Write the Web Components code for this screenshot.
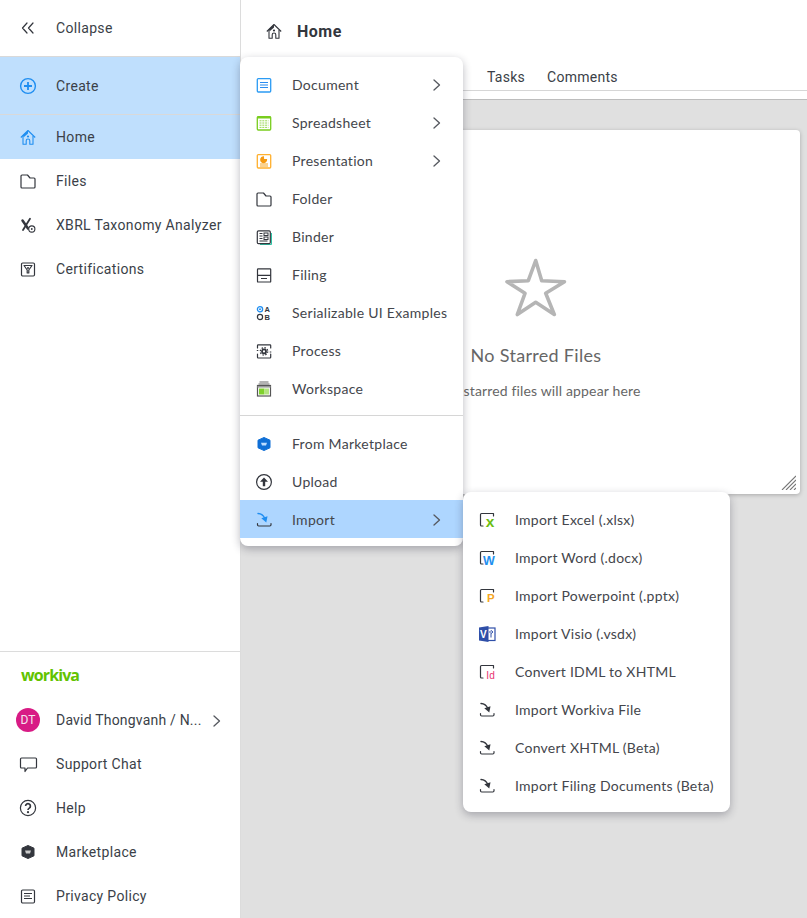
<!DOCTYPE html>
<html lang="en"><head><meta charset="utf-8"><title>Home</title>
<style>html,body{margin:0;padding:0;background:#fff}body{width:807px;height:918px;overflow:hidden;font-family:Roboto,"Liberation Sans",sans-serif}</style>
</head><body>
<wk-app>
  <wk-sidebar slot="side">
    <wk-nav-row icon="collapse" tall="56" rule>Collapse</wk-nav-row>
    <wk-nav-row icon="create" tall="57" rule selected>Create</wk-nav-row>
    <wk-nav-row icon="home" tall="44" selected>Home</wk-nav-row>
    <wk-nav-row icon="folder" tall="44">Files</wk-nav-row>
    <wk-nav-row icon="xbrl" tall="44">XBRL Taxonomy Analyzer</wk-nav-row>
    <wk-nav-row icon="cert" tall="44">Certifications</wk-nav-row>
    <wk-side-footer slot="foot">
      <wk-nav-row avatar="DT" tall="44" chevron style="letter-spacing:.2px">David Thongvanh / N...</wk-nav-row>
      <wk-nav-row icon="chat" tall="44">Support Chat</wk-nav-row>
      <wk-nav-row icon="help" tall="44">Help</wk-nav-row>
      <wk-nav-row icon="market" tall="44">Marketplace</wk-nav-row>
      <wk-nav-row icon="privacy" tall="44">Privacy Policy</wk-nav-row>
    </wk-side-footer>
  </wk-sidebar>
  <wk-main slot="main"></wk-main>
  <wk-menu slot="over" class="a" style="--l:240px;--t:57px;--w:223px">
    <wk-menu-item icon="doc" chevron>Document</wk-menu-item>
    <wk-menu-item icon="sheet" chevron>Spreadsheet</wk-menu-item>
    <wk-menu-item icon="pres" chevron>Presentation</wk-menu-item>
    <wk-menu-item icon="folder">Folder</wk-menu-item>
    <wk-menu-item icon="binder">Binder</wk-menu-item>
    <wk-menu-item icon="filing">Filing</wk-menu-item>
    <wk-menu-item icon="serial">Serializable UI Examples</wk-menu-item>
    <wk-menu-item icon="process">Process</wk-menu-item>
    <wk-menu-item icon="workspace">Workspace</wk-menu-item>
    <wk-menu-rule></wk-menu-rule>
    <wk-menu-item icon="marketblue" low>From Marketplace</wk-menu-item>
    <wk-menu-item icon="upload" low>Upload</wk-menu-item>
    <wk-menu-item icon="import" chevron active low>Import</wk-menu-item>
  </wk-menu>
  <wk-menu slot="over" wide style="--l:463px;--t:492px;--w:267px">
    <wk-menu-item icon="xl" wide>Import Excel (.xlsx)</wk-menu-item>
    <wk-menu-item icon="wd" wide>Import Word (.docx)</wk-menu-item>
    <wk-menu-item icon="pp" wide>Import Powerpoint (.pptx)</wk-menu-item>
    <wk-menu-item icon="vs" wide>Import Visio (.vsdx)</wk-menu-item>
    <wk-menu-item icon="id" wide>Convert IDML to XHTML</wk-menu-item>
    <wk-menu-item icon="importdark" wide>Import Workiva File</wk-menu-item>
    <wk-menu-item icon="importdark" wide>Convert XHTML (Beta)</wk-menu-item>
    <wk-menu-item icon="importdark" wide>Import Filing Documents (Beta)</wk-menu-item>
  </wk-menu>
</wk-app>
<script>
const D='#33363d',S=`fill="none" stroke="${D}" stroke-width="1.2" stroke-linecap="round" stroke-linejoin="round"`;
const T=(x,y,s,c,t,w=700)=>`<text x="${x}" y="${y}" font-family="Liberation Sans,sans-serif" font-size="${s}" font-weight="${w}" fill="${c}">${t}</text>`;
const docShell=`<path ${S} d="M3.500 15V4.500a1 1 0 0 1 1-1H16.500V6M3.500 15a1 1 0 0 0 1 1H6"/>`;
const imp=(c)=>`<path fill="none" stroke="${c}" stroke-width="1.400" stroke-linecap="round" d="M4 3.500c3.200.1 5.500 1.700 6.800 5"/><path fill="${c}" d="M7.300 8.300l6.200-2.100-1.200 6.300z"/><path ${S} d="M3.500 13.500v1.300a1.200 1.200 0 0 0 1.200 1.200h11.100a1.200 1.200 0 0 0 1.200-1.200v-1.300"/>`;
const homeI=(c)=>`<g fill="none" stroke="${c}" stroke-width="1.100" stroke-linejoin="round"><path d="M2.800 10.500L10 3.500l7.200 7"/><path d="M5 9V17.300h3.200v-3.500a1.800 1.800 0 0 1 3.600 0v3.500H15V9"/></g><path fill="${c}" d="M4.500 8.500L10 3.500v3L6 10z"/><circle cx="10" cy="9.500" r="1.100" fill="${c}"/>`;
const ICONS={
collapse:`<path ${S} d="M9 5L4.500 10L9 15M15 5L10.500 10L15 15"/>`,
create:`<circle cx="10" cy="10" r="7.400" fill="none" stroke="#1f8ef1" stroke-width="1.400"/><path stroke="#1f8ef1" stroke-width="1.800" d="M10 6v8M6 10h8"/>`,
home:homeI('#1f8ef1'),
homedark:homeI(D),
folder:`<path ${S} d="M3 5a1 1 0 0 1 1-1H9.500L12 7H16a1 1 0 0 1 1 1V16a1 1 0 0 1-1 1H4a1 1 0 0 1-1-1Z"/>`,
xbrl:`<path stroke="${D}" stroke-width="2.500" stroke-linecap="round" d="M4.500 5.500l5.500 8"/><path stroke="${D}" stroke-width="1.800" stroke-linecap="round" d="M12 3.800L5 15"/><circle cx="13.800" cy="14" r="3.100" fill="#fff" stroke="${D}" stroke-width="1.100"/><circle cx="13.800" cy="14" r=".9" fill="${D}"/>`,
cert:`<rect x="3.500" y="4" width="13" height="13" rx="1.200" ${S}/><path ${S} d="M6 6.500L9.200 11v3h1.600v-3L14 6.500z"/><circle cx="10" cy="9" r="1" fill="${D}"/>`,
chat:`<path ${S} d="M2.500 5a1 1 0 0 1 1-1H17.500a1 1 0 0 1 1 1v8a1 1 0 0 1-1 1H9.500L7 17.500V14H3.500a1 1 0 0 1-1-1Z"/>`,
help:`<circle cx="10" cy="10" r="7.600" ${S}/><path fill="none" stroke="${D}" stroke-width="1.700" d="M7.600 8.100a2.400 2.400 0 1 1 3.700 2c-.9.600-1.300 1-1.300 2"/><circle cx="10" cy="14.200" r="1.100" fill="${D}"/>`,
market:`<path fill="${D}" d="M10 3.500l6 2.700v7.600l-6 2.700-6-2.700V6.200z" stroke="${D}" stroke-linejoin="round"/><path fill="#ccc" d="M7 8.500h6l-1 3H8z"/>`,
marketblue:`<path fill="#0f6fd6" d="M10 3.500l6 2.700v7.600l-6 2.700-6-2.700V6.200z" stroke="#0f6fd6" stroke-linejoin="round"/><path fill="#bcdcff" d="M7 8.800h6l-1 2.700H8z"/>`,
privacy:`<rect x="3.500" y="4" width="13" height="13" rx="1.200" ${S}/><path stroke="${D}" d="M6 7.500h8M6 10h6M6 12.500h8"/>`,
doc:`<rect x="3.300" y="3.600" width="13.400" height="13.400" rx="1" fill="#fff" stroke="#2b9bf4" stroke-width="1.300"/><path stroke="#2b8cf0" stroke-width="1.100" d="M6 7.500h8M6 10h8M6 12.500h8"/>`,
sheet:`<rect x="3.300" y="3.600" width="13.400" height="13.400" rx="1" fill="#fff" stroke="#79cd1e" stroke-width="1.300"/><path fill="#79cd1e" d="M3 3.500h14V5.500H3z"/><path stroke="#8bd33c" stroke-width=".9" stroke-dasharray="2 .8" d="M5.500 7.800h9M5.500 10h9M5.500 12.200h9M5.500 14.400h9"/>`,
pres:`<rect x="3.300" y="3.600" width="13.400" height="13.400" rx="1" fill="#fff" stroke="#ffb02e" stroke-width="1.300"/><path fill="#f59a12" d="M10 5.200l.1 2.800 3 .1a3.500 3.500 0 1 1-3.100-2.900z"/><path stroke="#f5a623" d="M6 13h8M6 15h8"/>`,
binder:`<path fill="none" stroke="#2ec4a6" stroke-width="1" d="M17.500 6v11.500H6"/><rect x="3.300" y="3.800" width="13" height="12.800" rx="1.200" ${S}/><path stroke="${D}" stroke-width="1.100" d="M5.500 6.500h3M5.500 9h3M5.500 11.500h3M5.500 14h8"/><rect x="10" y="6" width="4" height="2.500" fill="none" stroke="${D}"/><rect x="10" y="10" width="4" height="2.500" fill="none" stroke="${D}"/>`,
filing:`<rect x="3.500" y="3.800" width="13.200" height="13.200" rx=".6" ${S}/><path stroke="${D}" stroke-width="1.200" d="M3.500 10.400h13.200M7 13.500h6"/>`,
serial:`<circle cx="6" cy="6.200" r="2.600" fill="none" stroke="#1f8ef1" stroke-width="1.300"/><circle cx="6" cy="6.200" r="1" fill="#1f8ef1"/><circle cx="6" cy="14" r="2.600" fill="none" stroke="${D}" stroke-width="1.200"/>${T(10.500,9,7.500,D,'A')}${T(10.500,17,7.500,D,'B')}`,
process:`<path ${S} d="M3.500 7V4.500a.7.7 0 0 1 .7-.7H16a.7.7 0 0 1 .7.7V7M3.500 13v3.300a.7.7 0 0 0 .7.7H16a.7.7 0 0 0 .7-.7V13"/><circle cx="10" cy="10.400" r="2" fill="none" stroke="${D}" stroke-width="1.800"/><circle cx="10" cy="10.400" r="3.700" fill="none" stroke="${D}" stroke-width="1.300" stroke-dasharray="1.500 1.400"/><path stroke="${D}" d="M2.800 9.500h1.500M15.800 11h1.500"/>`,
workspace:`<path stroke="#666" stroke-width="1" d="M5.500 3h9M4.500 5h11"/><rect x="3.500" y="6.500" width="13" height="10.500" fill="#fff" stroke="#555" stroke-width="1.200"/><path fill="#999" d="M3.500 7h13V8.600h-13z"/><path fill="#7fd12c" d="M5 9.500h5.500v6H5z"/><path fill="#b3e37f" d="M10.500 9.500H15v6h-4.500z"/>`,
upload:`<circle cx="10" cy="10" r="7.400" ${S}/><path fill="${D}" d="M10 5.500l4 4.300h-2.800v4.500H8.800V9.800H6z"/>`,
import:imp('#1f8ef1'),
importdark:imp(D),
xl:docShell+T(8.800,16.500,15.500,'#6cbe10','x'),
wd:docShell+T(6,16.500,12.500,'#1e90f0','W'),
pp:docShell+T(10,16.300,11.500,'#f5a623','P'),
vs:`<rect x="10" y="4" width="8" height="12.500" fill="#fff" stroke="#2f4fa8" stroke-width="1.200"/><path fill="#2f4fa8" d="M2 3.500L11.500 2V18L2 16.500z"/>${T(3,14,10,'#fff','V')}<path fill="none" stroke="#2f4fa8" d="M14 6.500l2 1.500-2 1.500-1.500-1.500zM14 9.500v4"/>`,
id:docShell+T(9.300,16.500,10,'#e8336f','Id',400)
};
const def=(n,html,cls)=>customElements.define(n,class extends HTMLElement{constructor(){super();this.attachShadow({mode:'open'}).innerHTML=html;}connectedCallback(){cls&&cls.call(this);}});
const svg=(n,s=20)=>`<svg width="${s}" height="${s}" viewBox="0 0 20 20" aria-hidden="true">${ICONS[n]||''}</svg>`;
const CHEV=`<svg width="8" height="14" viewBox="0 0 8 14"><path d="M1 2L6.500 7L1 12" fill="none" stroke="#55585f" stroke-width="1.300" stroke-linecap="round" stroke-linejoin="round"/></svg>`;

def('wk-app',`<style>:host{display:flex;position:relative;width:807px;height:918px;overflow:hidden}</style><slot name="side"></slot><slot name="main"></slot><slot name="over"></slot>`);

def('wk-sidebar',`<style>:host{display:flex;flex-direction:column;flex:none;width:240px;height:918px;border-right:1px solid #dcdcdc;background:#fff}
.top{display:flex;flex-direction:column}.grow{flex:1}</style><div class="top"><slot></slot></div><div class="grow"></div><slot name="foot"></slot>`);

def('wk-side-footer',`<style>:host{display:flex;flex-direction:column;border-top:1px solid #dcdcdc}
.logo{height:46px;display:flex;align-items:center;padding-left:21px;box-sizing:border-box;font:700 16px/1 "Open Sans",sans-serif;letter-spacing:-.9px;color:#62c300}</style><div class="logo">workiva</div><slot></slot>`);

def('wk-nav-row',`<style>:host{display:flex;align-items:center;box-sizing:content-box;padding-left:18px;font:400 14px/20px Roboto,sans-serif;letter-spacing:.33px;color:#3b3f48;white-space:nowrap}
:host([selected]){background:#bfdffd}:host([rule]){border-bottom:1px solid #d9d9d9}
.i{width:20px;height:20px;flex:none;margin-right:18px;display:block}.i svg{display:block}
.av{width:24px;height:24px;margin:0 16px 0 -2px;border-radius:50%;background:#d81b85;color:#f4e4ee;font:400 12px/24px Roboto,sans-serif;text-align:center;flex:none;letter-spacing:0}
.c{margin-left:11px;display:block;height:14px}</style><span class="i"></span><slot></slot><span class="c"></span>`,function(){
 const r=this.shadowRoot,i=r.querySelector('.i'),c=r.querySelector('.c');
 this.style.height=this.getAttribute('tall')+'px';
 if(this.hasAttribute('avatar')){i.className='av';i.textContent=this.getAttribute('avatar');}else i.innerHTML=svg(this.getAttribute('icon'));
 if(this.hasAttribute('chevron'))c.innerHTML=CHEV;else c.remove();
});

def('wk-main',`<style>:host{display:flex;flex-direction:column;flex:1;min-width:0;height:918px;background:#e0e0e0}
header{background:#fff;height:99px;border-bottom:1px solid #bdbdbd;display:flex;flex-direction:column;flex:none}
.title{height:60px;display:flex;align-items:center;padding:4px 0 0 23px;gap:13px;flex:none;box-sizing:border-box;font:700 16px/20px Roboto,sans-serif;letter-spacing:.5px;color:#33363d}
.tabs{height:30px;display:flex;gap:22px;padding-left:246px;border-bottom:1px solid #d6d6d6;font:400 14px/34px Roboto,sans-serif;letter-spacing:.26px;color:#3b3f48}
.area{flex:1;padding:30px 7px 0 31px}
</style><header><div class="title"><span style="height:20px;margin-top:-2px">${svg('homedark')}</span>Home</div><div class="tabs"><span>Tasks</span><span>Comments</span></div></header><div class="area"><wk-empty-card></wk-empty-card></div>`);

def('wk-empty-card',`<style>:host{display:flex;flex-direction:column;align-items:center;position:relative;height:364px;box-sizing:border-box;padding-top:128px;background:#fff;border-radius:4px;box-shadow:0 1px 4px rgba(0,0,0,.25);font-family:Lato,sans-serif;color:#666}
svg.s{display:block}h2{font:400 18px/24px Lato,sans-serif;letter-spacing:.3px;margin:25px 0 0;color:#666}p{font:400 14px/20px Lato,sans-serif;letter-spacing:.15px;margin:14px 0 0;padding-left:32px;color:#666}
.r{position:absolute;right:4px;bottom:4px}</style>
<svg class="s" width="62" height="60" viewBox="0 0 62 60"><path fill="none" stroke="#b5b5b5" stroke-width="3.600" stroke-linejoin="round" d="M30.700 2.500L36.700 22.700L59.500 23.700L40.700 35.300L49.300 56.500L30.700 44.300L12.300 56.500L20 35.300L2 23.700L23.300 22.700Z"/></svg>
<h2>No Starred Files</h2><p>starred files will appear here</p>
<svg class="r" width="15" height="15" viewBox="0 0 15 15"><path stroke="#777" stroke-width="1.100" d="M1 15L15 1M5 15L15 5M9 15L15 9M13 15L15 13"/></svg>`);

def('wk-menu',`<style>:host{position:absolute;left:var(--l);top:var(--t);width:var(--w);box-sizing:border-box;padding:9px 0 8px;background:#fff;border-radius:8px;box-shadow:0 3px 9px rgba(40,40,60,.32);z-index:5;display:flex;flex-direction:column}
:host([wide]){padding:9px 0 7px;z-index:6}</style><slot></slot>`);

def('wk-menu-rule',`<style>:host{display:block;height:1px;background:#d6d6d6;margin:7px 0 8px}</style>`);

def('wk-menu-item',`<style>:host{display:flex;align-items:center;height:38px;box-sizing:border-box;padding-left:14px;font:400 14px/20px Lato,sans-serif;letter-spacing:.29px;color:#44464c;white-space:nowrap}
:host([low]){padding-top:2px}
:host([active]){background:#aed6ff}
:host([wide]){letter-spacing:.25px}
.i{width:20px;height:20px;margin-right:18px;flex:none}.i svg{display:block}
.c{margin-left:auto;margin-right:22px;height:14px;position:relative;top:-1px}</style><span class="i"></span><slot></slot><span class="c"></span>`,function(){
 const r=this.shadowRoot,c=r.querySelector('.c');
 r.querySelector('.i').innerHTML=svg(this.getAttribute('icon'));
 if(this.hasAttribute('chevron'))c.innerHTML=CHEV;else c.remove();
});
</script>
</body></html>
